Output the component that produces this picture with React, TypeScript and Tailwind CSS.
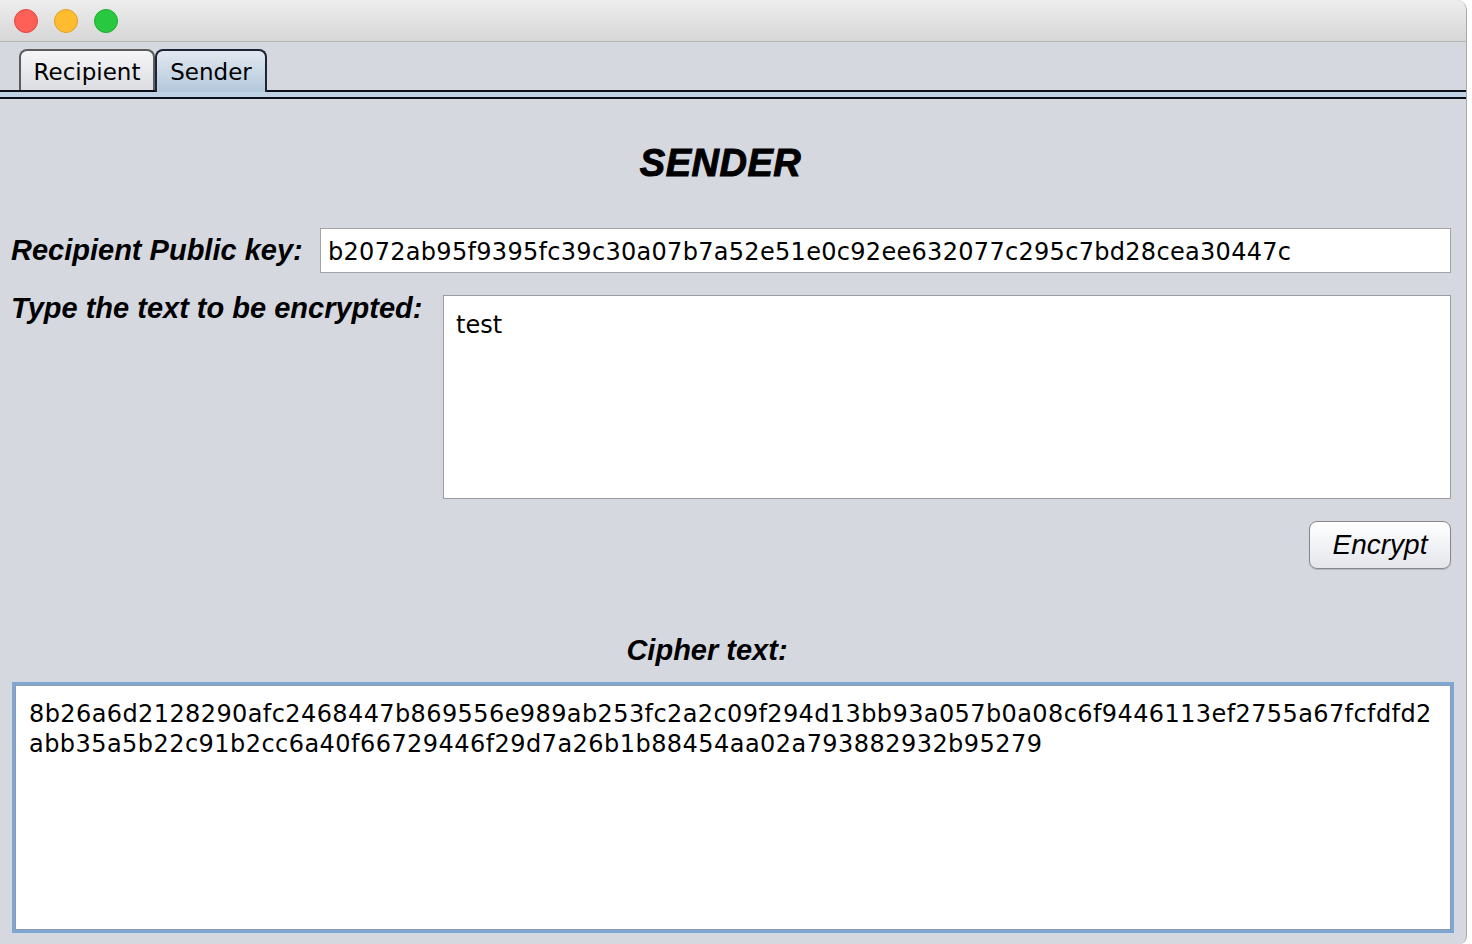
import React from "react";

const KEY = "b2072ab95f9395fc39c30a07b7a52e51e0c92ee632077c295c7bd28cea30447c";
const L1 = "8b26a6d2128290afc2468447b869556e989ab253fc2a2c09f294d13bb93a057b0a08c6f9446113ef2755a67fcfdfd2";
const L2 = "abb35a5b22c91b2cc6a40f66729446f29d7a26b1b88454aa02a793882932b95279";

const label = "font-['Liberation_Sans',Arial,sans-serif] font-bold italic text-[29px] leading-[29px] text-black";
const mono = "font-['DejaVu_Sans',sans-serif] text-[24px] text-black";

export default function App() {
  return (
    <div className="w-[1472px] h-[944px] bg-white overflow-hidden">
      <div className="w-[1467px] h-[944px] flex flex-col bg-[#d5d8df] border-r border-[#a9a9a9] rounded-tr-[10px] rounded-br-[8px] overflow-hidden">
        {/* Title bar */}
        <div className="h-[42px] shrink-0 flex items-center gap-[16px] pl-[14px] bg-gradient-to-b from-[#ededed] to-[#d7d7d7] border-b border-[#b4b4b4]">
          <div className="w-[24px] h-[24px] rounded-full bg-[#fe5f57] border border-[#e2463f]" />
          <div className="w-[24px] h-[24px] rounded-full bg-[#febc2e] border border-[#dfa023]" />
          <div className="w-[24px] h-[24px] rounded-full bg-[#28c840] border border-[#1dac2c]" />
        </div>

        {/* Tabs */}
        <div className="h-[48px] shrink-0 flex items-end pl-[19px]">
          <div className="h-[41px] w-[136px] flex items-center justify-center border-2 border-b-0 border-[#5c5c5e] rounded-t-[8px] bg-gradient-to-b from-[#f6f6f8] to-[#dcdde2] font-['DejaVu_Sans',sans-serif] text-[23px] leading-[26px] text-black pt-[2px]">
            Recipient
          </div>
          <div className="relative z-10 -mb-[2px] h-[43px] w-[112px] flex items-center justify-center border-2 border-b-0 border-[#1b2535] rounded-t-[8px] bg-gradient-to-b from-[#e2e8f0] to-[#b3c8dc] font-['DejaVu_Sans',sans-serif] text-[23px] leading-[26px] text-black pt-[1px]">
            Sender
          </div>
        </div>
        <div className="h-[9px] shrink-0 border-y-2 border-[#0d0f18] bg-[#bfd2e6]" />

        {/* Heading */}
        <div className="mt-[44px] w-[1441px] text-center font-['Liberation_Sans',Arial,sans-serif] font-black italic text-[38px] leading-[40px] tracking-[0.5px] text-black [-webkit-text-stroke:1px_black]">
          SENDER
        </div>

        {/* Key row */}
        <div className="mt-[45px] flex items-start pl-[11px] pr-[15px]">
          <div className={`${label} w-[309px] shrink-0 mt-[8px]`}>Recipient Public key:</div>
          <div className="flex-1 h-[45px] bg-white border border-[#a3a3a6] pl-[7px] pt-[3px] flex items-center">
            <span className={`${mono} tracking-[0.3px] leading-[40px] whitespace-pre`}>{KEY}</span>
          </div>
        </div>

        {/* Text row */}
        <div className="mt-[22px] flex items-start pl-[11px] pr-[15px]">
          <div className={`${label} w-[432px] shrink-0 -mt-[1px]`}>Type the text to be encrypted:</div>
          <div className="flex-1 h-[204px] bg-white border border-[#9d9da1] pl-[12px] pt-[14px]">
            <div className={`${mono} leading-[30px]`}>test</div>
          </div>
        </div>

        {/* Button */}
        <div className="mt-[22px] flex justify-end pr-[15px]">
          <button className="w-[142px] h-[48px] rounded-[8px] border border-[#85878c] bg-gradient-to-b from-[#ffffff] to-[#e4e6eb] shadow-[0_1px_1px_rgba(0,0,0,0.15)] font-['Liberation_Sans',Arial,sans-serif] italic text-[28px] leading-[30px] text-black">
            Encrypt
          </button>
        </div>

        {/* Cipher label */}
        <div className={`${label} mt-[67px] w-[1414px] text-center`}>Cipher text:</div>

        {/* Cipher area */}
        <div className="mt-[17px] ml-[12px] w-[1442px] h-[251px] border-[3px] border-[#7fa7d3]">
          <div className="w-full h-full bg-white border border-[#8f9bab] pl-[13px] pt-[13px]">
            <div className={`${mono} tracking-[0.4px] leading-[30px] whitespace-pre`}>{L1}</div>
            <div className={`${mono} tracking-[0.45px] leading-[30px] whitespace-pre`}>{L2}</div>
          </div>
        </div>
      </div>
    </div>
  );
}
